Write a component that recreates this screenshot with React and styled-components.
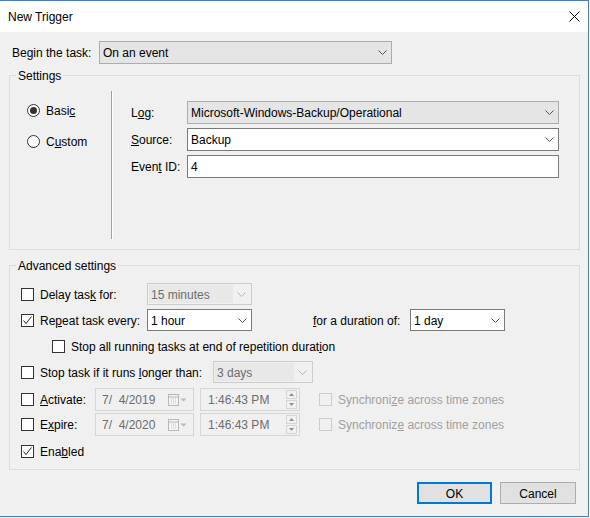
import React from 'react';
import styled, { createGlobalStyle } from 'styled-components';

const GlobalStyle = createGlobalStyle`
  body {
    margin: 0;
    background: #ffffff;
    font-family: "Liberation Sans", Arial, sans-serif;
    font-size: 12px;
    color: #000;
  }
`;

const Window = styled.div`
  box-sizing: border-box;
  width: 589px;
  height: 517px;
  border: 1px solid #4a7ebb;
  border-left: none;
  background: #f0f0f0;
  display: flex;
  flex-direction: column;
`;

const TitleBar = styled.div`
  height: 31px;
  flex-shrink: 0;
  background: #ffffff;
  display: flex;
  align-items: center;
  justify-content: space-between;
  padding: 0 8px;
  line-height: 15px;
`;

const TitleText = styled.span`
  padding-top: 2px;
`;

const Body = styled.div`
  display: flex;
  flex-direction: column;
  padding: 0 8px 0 9px;
`;

const Row = styled.div`
  display: flex;
  align-items: center;
  flex-shrink: 0;
  height: ${p => p.$h || 22}px;
  margin-top: ${p => p.$mt || 0}px;
  padding-left: ${p => p.$pl || 0}px;
`;

const Label = styled.span`
  flex-shrink: 0;
  white-space: nowrap;
  width: ${p => (p.$w ? `${p.$w}px` : 'auto')};
  margin-left: ${p => p.$ml || 0}px;
  color: ${p => (p.$off ? '#a0a0a0' : '#000')};
  line-height: 15px;
  padding-top: 2px;
`;

const Group = styled.div`
  position: relative;
  box-sizing: border-box;
  width: 571px;
  height: ${p => p.$h}px;
  margin-top: ${p => p.$mt}px;
  border: 1px solid #dcdcdc;
  flex-shrink: 0;
`;

const Legend = styled.span`
  position: absolute;
  top: -7px;
  left: 6px;
  padding: 0 2px;
  background: #f0f0f0;
  line-height: 15px;
`;

const SettingsInner = styled.div`
  display: flex;
  align-items: flex-start;
  padding-top: 15px;
`;

const RadioCol = styled.div`
  width: 101px;
  box-sizing: border-box;
  padding-left: 17px;
  display: flex;
  flex-direction: column;
`;

const Separator = styled.div`
  width: 0;
  height: 148px;
  border-left: 1px solid #a0a0a0;
  border-right: 1px solid #ffffff;
`;

const FieldCol = styled.div`
  display: flex;
  flex-direction: column;
  padding: 10px 0 0 18px;
`;

const AdvancedInner = styled.div`
  display: flex;
  flex-direction: column;
  padding: 17px 0 0 11px;
`;

const Radio = styled.span`
  box-sizing: border-box;
  width: 13px;
  height: 13px;
  border: 1px solid #333;
  border-radius: 50%;
  background: #fff;
  margin-right: 6px;
  display: flex;
  align-items: center;
  justify-content: center;
  flex-shrink: 0;

  &::after {
    content: '';
    display: ${p => (p.$on ? 'block' : 'none')};
    width: 7px;
    height: 7px;
    border-radius: 50%;
    background: #333;
  }
`;

const Box = styled.span`
  box-sizing: border-box;
  width: 13px;
  height: 13px;
  border: 1px solid ${p => (p.$off ? '#cccccc' : '#333333')};
  background: ${p => (p.$off ? 'transparent' : '#ffffff')};
  margin-right: 6px;
  margin-left: ${p => p.$ml || 0}px;
  display: flex;
  align-items: center;
  justify-content: center;
  flex-shrink: 0;
`;

const comboLook = {
  list: { bg: '#e5e5e5', border: '#adadad', color: '#000' },
  edit: { bg: '#ffffff', border: '#7a7a7a', color: '#000' },
  off: { bg: '#f0f0f0', border: '#cccccc', color: '#6d6d6d' },
};

const ComboBox = styled.div`
  box-sizing: border-box;
  width: ${p => p.$w}px;
  height: ${p => p.$h || 22}px;
  margin-left: ${p => p.$ml || 0}px;
  border: 1px solid ${p => comboLook[p.$kind].border};
  background: ${p => comboLook[p.$kind].bg};
  color: ${p => comboLook[p.$kind].color};
  display: flex;
  align-items: stretch;
  padding: ${p => (p.$kind === 'off' ? '1px' : '0 0 0 3px')};
  flex-shrink: 0;
`;

const ComboText = styled.span`
  flex: 1;
  display: flex;
  align-items: center;
  white-space: nowrap;
  padding-left: ${p => (p.$off ? '2px' : '0')};
  padding-top: 2px;
  background: ${p => (p.$off ? '#e8e8e8' : 'transparent')};
  line-height: 15px;
`;

const ArrowBox = styled.span`
  width: 17px;
  display: flex;
  align-items: center;
  justify-content: center;
`;

const DateBox = styled.div`
  box-sizing: border-box;
  width: ${p => p.$w}px;
  height: 23px;
  margin-left: ${p => p.$ml || 0}px;
  border: 1px solid #d5d5d5;
  background: #f0f0f0;
  color: #6d6d6d;
  display: flex;
  align-items: center;
  justify-content: space-between;
  padding: 0 ${p => p.$pr || 6}px 0 ${p => p.$pl || 6}px;
  flex-shrink: 0;
  white-space: pre;
  line-height: 15px;
`;

const DateText = styled.span`
  padding-top: 2px;
`;

const Spin = styled.span`
  display: flex;
  flex-direction: column;
  gap: 1px;
`;

const SpinBtn = styled.span`
  box-sizing: border-box;
  width: 11px;
  height: 9px;
  border: 1px solid #d5d5d5;
  display: flex;
  align-items: center;
  justify-content: center;
`;

const ButtonRow = styled.div`
  display: flex;
  justify-content: flex-end;
  gap: 8px;
  margin-top: 12px;
  padding-right: 4px;
`;

const Button = styled.div`
  box-sizing: border-box;
  width: ${p => p.$w}px;
  height: 22px;
  border: ${p => (p.$primary ? '2px solid #0078d7' : '1px solid #adadad')};
  background: #e1e1e1;
  display: flex;
  align-items: center;
  justify-content: center;
  line-height: 15px;
  padding-top: 2px;
`;

const Chevron = ({ color = '#555' }) => (
  <svg width="9" height="5" viewBox="0 0 9 5">
    <polyline points="0.5,0.5 4.5,4.5 8.5,0.5" fill="none" stroke={color} strokeWidth="1" />
  </svg>
);

const Check = () => (
  <svg width="11" height="11" viewBox="0 0 11 11">
    <polyline points="1.5,5.5 4,8.5 9.5,1.5" fill="none" stroke="#222" strokeWidth="1" />
  </svg>
);

const CloseIcon = () => (
  <svg width="11" height="11" viewBox="0 0 11 11">
    <path d="M0.5 0.5 L10.5 10.5 M10.5 0.5 L0.5 10.5" stroke="#000" strokeWidth="1" fill="none" />
  </svg>
);

const CalendarIcon = () => (
  <svg width="19" height="12" viewBox="0 0 19 12">
    <rect x="0.5" y="0.5" width="10" height="11" fill="#f4f4f4" stroke="#b8b8b8" />
    <line x1="0.5" y1="3" x2="10.5" y2="3" stroke="#b8b8b8" />
    <path d="M3 5h1M5 5h1M7 5h1M3 7h1M5 7h1M7 7h1M3 9h1M5 9h1M7 9h1" stroke="#c8c8c8" />
    <polygon points="12.5,4.5 18.5,4.5 15.5,7.5" fill="#b8b8b8" />
  </svg>
);

const Tri = ({ up }) => (
  <svg width="5" height="3" viewBox="0 0 5 3">
    <polygon points={up ? '0,3 5,3 2.5,0' : '0,0 5,0 2.5,3'} fill="#909090" />
  </svg>
);

const Combo = ({ kind = 'edit', w, h, ml, children }) => (
  <ComboBox $kind={kind} $w={w} $h={h} $ml={ml}>
    <ComboText $off={kind === 'off'}>{children}</ComboText>
    <ArrowBox>
      <Chevron color={kind === 'off' ? '#b5b5b5' : '#555'} />
    </ArrowBox>
  </ComboBox>
);

const DateField = ({ value, ml }) => (
  <DateBox $w={99} $ml={ml} $pr={6}>
    <DateText>{value}</DateText>
    <CalendarIcon />
  </DateBox>
);

const TimeField = ({ value }) => (
  <DateBox $w={100} $ml={6} $pl={7} $pr={2}>
    <DateText>{value}</DateText>
    <Spin>
      <SpinBtn><Tri up /></SpinBtn>
      <SpinBtn><Tri /></SpinBtn>
    </Spin>
  </DateBox>
);

export default function App() {
  return (
    <>
      <GlobalStyle />
      <Window>
        <TitleBar>
          <TitleText>New Trigger</TitleText>
          <CloseIcon />
        </TitleBar>
        <Body>
          <Row $h={23} $mt={9} $pl={3}>
            <Label $w={87}>Begin the task:</Label>
            <Combo kind="list" w={293} h={23}>On an event</Combo>
          </Row>

          <Group $h={175} $mt={11}>
            <Legend>Settings</Legend>
            <SettingsInner>
              <RadioCol>
                <Row $h={18} $mt={10}>
                  <Radio $on />
                  <Label>Basi<u>c</u></Label>
                </Row>
                <Row $h={18} $mt={13}>
                  <Radio />
                  <Label>C<u>u</u>stom</Label>
                </Row>
              </RadioCol>
              <Separator />
              <FieldCol>
                <Row $h={23}>
                  <Label $w={56}>L<u>o</u>g:</Label>
                  <Combo kind="list" w={372} h={23}>Microsoft-Windows-Backup/Operational</Combo>
                </Row>
                <Row $h={23} $mt={4}>
                  <Label $w={56}><u>S</u>ource:</Label>
                  <Combo kind="edit" w={372} h={23}>Backup</Combo>
                </Row>
                <Row $h={23} $mt={4}>
                  <Label $w={56}>Even<u>t</u> ID:</Label>
                  <ComboBox $kind="edit" $w={372} $h={23}>
                    <ComboText>4</ComboText>
                  </ComboBox>
                </Row>
              </FieldCol>
            </SettingsInner>
          </Group>

          <Group $h={205} $mt={15}>
            <Legend>Advanced settings</Legend>
            <AdvancedInner>
              <Row $h={22}>
                <Box />
                <Label $w={107}>Delay tas<u>k</u> for:</Label>
                <Combo kind="off" w={105}>15 minutes</Combo>
              </Row>
              <Row $h={22} $mt={4}>
                <Box><Check /></Box>
                <Label $w={107}>Re<u>p</u>eat task every:</Label>
                <Combo w={105}>1 hour</Combo>
                <Label $w={97} $ml={61}><u>f</u>or a duration of:</Label>
                <Combo w={95}>1 day</Combo>
              </Row>
              <Row $h={18} $mt={6} $pl={31}>
                <Box />
                <Label>Stop all running tasks at end of repetition durat<u>i</u>on</Label>
              </Row>
              <Row $h={22} $mt={6}>
                <Box />
                <Label $w={173}>Stop task if it runs <u>l</u>onger than:</Label>
                <Combo kind="off" w={100}>3 days</Combo>
              </Row>
              <Row $h={23} $mt={5}>
                <Box />
                <Label $w={55}><u>A</u>ctivate:</Label>
                <DateField value="7/  4/2019" />
                <TimeField value="1:46:43 PM" />
                <Box $off $ml={19} />
                <Label $off>Synchroni<u>z</u>e across time zones</Label>
              </Row>
              <Row $h={23} $mt={2}>
                <Box />
                <Label $w={55}>E<u>x</u>pire:</Label>
                <DateField value="7/  4/2020" />
                <TimeField value="1:46:43 PM" />
                <Box $off $ml={19} />
                <Label $off>Synchroniz<u>e</u> across time zones</Label>
              </Row>
              <Row $h={18} $mt={6}>
                <Box><Check /></Box>
                <Label>Ena<u>b</u>led</Label>
              </Row>
            </AdvancedInner>
          </Group>

          <ButtonRow>
            <Button $w={75} $primary>OK</Button>
            <Button $w={76}>Cancel</Button>
          </ButtonRow>
        </Body>
      </Window>
    </>
  );
}
